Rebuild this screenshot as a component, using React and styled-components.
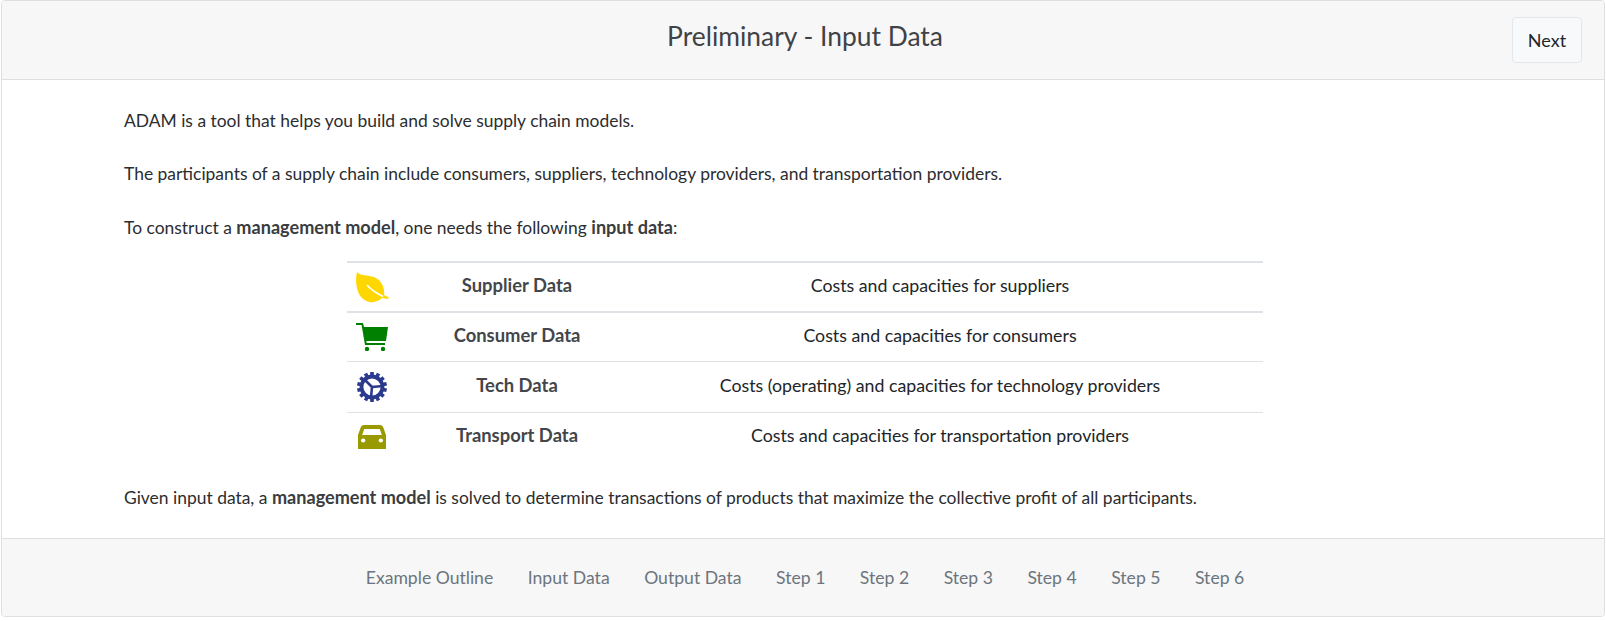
import React from 'react'
import styled, { createGlobalStyle } from 'styled-components'

const GlobalStyle = createGlobalStyle`
  html, body {
    margin: 0;
    padding: 0;
    background: #fff;
    font-family: Lato, "Open Sans", sans-serif;
    color: #212529;
  }
`

const Card = styled.div`
  margin: 0 1px;
  width: 1604px;
  height: 617px;
  box-sizing: border-box;
  border: 1px solid #dfdfdf;
  border-radius: 4px;
  display: flex;
  flex-direction: column;
  overflow: hidden;
`

const Header = styled.header`
  height: 79px;
  flex: none;
  box-sizing: border-box;
  padding-left: 4px;
  background: #f7f7f7;
  border-bottom: 1px solid #dfdfdf;
  position: relative;
  display: flex;
  align-items: center;
  justify-content: center;
`

const Title = styled.h1`
  margin: 0 0 9px;
  font-size: 26.4px;
  font-weight: 400;
  color: #3f4246;
`

const NextButton = styled.button`
  position: absolute;
  right: 22px;
  top: 16px;
  width: 70px;
  height: 46px;
  background: #f8f9fa;
  border: 1px solid #e4e7ea;
  border-radius: 4px;
  font: 400 18px Lato, sans-serif;
  color: #212529;
`

const Body = styled.main`
  flex: 1;
  min-height: 0;
  padding: 30px 118px 0 122px;
`

const Para = styled.p`
  margin: 0 0 ${p => p.$gap}px;
  font-size: 17.45px;
  line-height: 22px;
  color: #2b2d30;
`

const Strong = styled.b`
  font-size: 18.1px;
  font-weight: 700;
  color: #3a3c40;
`

const DataTable = styled.div`
  width: 916px;
  margin: 0 auto 24px;
`

const Row = styled.div`
  display: grid;
  grid-template-columns: 70px 200px 646px;
  align-items: center;
  height: 50.2px;
  box-sizing: border-box;
  border-top: ${p => (p.$heavy ? 2 : 1)}px solid #dee2e6;
`

const IconCell = styled.div`
  width: 50px;
  display: flex;
  align-items: center;
  justify-content: center;
`

const Name = styled.div`
  margin-bottom: 4px;
  text-align: center;
  font-size: 18.4px;
  font-weight: 700;
  color: #43464a;
`

const Desc = styled.div`
  margin-bottom: 4px;
  text-align: center;
  font-size: 17.75px;
  color: #212529;
`

const Footer = styled.footer`
  height: 78px;
  flex: none;
  box-sizing: border-box;
  padding-left: 4px;
  background: #f7f7f7;
  border-top: 1px solid #dfdfdf;
  display: flex;
  align-items: center;
  justify-content: center;
  gap: 34.5px;
`

const NavLink = styled.a`
  font-size: 17.6px;
  color: #6c757d;
`

const LeafIcon = () => (
  <svg width="33" height="31" viewBox="0 0 33 31">
    <path
      fill="#ffd700"
      d="M1 0 C4 4 12 3 18 5 C25 8 29 15 28 23 L33 25.5 L32 27 L26 26 C21 31 12 32 6 26 C0 20 -1 8 1 0 Z"
    />
    <path d="M11 13 C15 18 20 21 27 24.5" fill="none" stroke="#fff" strokeWidth="1.6" />
  </svg>
)

const CartIcon = () => (
  <svg width="32" height="28" viewBox="0 0 32 28">
    <g fill="#008000">
      <path d="M0 0 H7 L8 4 H32 L30 18 H10.3 L10.7 20 H29 V22 H9 L5.6 2 H0 Z" />
      <circle cx="11" cy="26" r="2.2" />
      <circle cx="27" cy="26" r="2.2" />
    </g>
  </svg>
)

const GearIcon = () => (
  <svg width="30" height="30" viewBox="0 0 30 30">
    <g fill="#2b3a8c">
      {Array.from({ length: 14 }).map((_, i) => (
        <rect key={i} x="13.2" y="0" width="3.6" height="5" transform={`rotate(${(i * 360) / 14} 15 15)`} />
      ))}
    </g>
    <circle cx="15" cy="15" r="10.5" fill="none" stroke="#2b3a8c" strokeWidth="3.8" />
    <path d="M15 15 L7 7 M15 15 L26 14 M15 15 L14 26" fill="none" stroke="#2b3a8c" strokeWidth="2.6" />
  </svg>
)

const CarIcon = () => (
  <svg width="28" height="24" viewBox="0 0 27 24" preserveAspectRatio="none">
    <path
      fill="#999900"
      d="M6 0 H21 C23 0 24 1 24.6 3 L27 10 V24 H0 V10 L2.4 3 C3 1 4 0 6 0 Z"
    />
    <path fill="#fff" d="M6 4 H21 L23 10 H4 Z" />
    <circle cx="5" cy="15.5" r="2.1" fill="#fff" />
    <circle cx="22" cy="15.5" r="2.1" fill="#fff" />
  </svg>
)

const rows = [
  { name: 'Supplier Data', desc: 'Costs and capacities for suppliers', icon: <LeafIcon />, heavy: true },
  { name: 'Consumer Data', desc: 'Costs and capacities for consumers', icon: <CartIcon />, heavy: true },
  { name: 'Tech Data', desc: 'Costs (operating) and capacities for technology providers', icon: <GearIcon /> },
  { name: 'Transport Data', desc: 'Costs and capacities for transportation providers', icon: <CarIcon /> },
]

const navItems = ['Example Outline', 'Input Data', 'Output Data', 'Step 1', 'Step 2', 'Step 3', 'Step 4', 'Step 5', 'Step 6']

export default function App() {
  return (
    <>
      <GlobalStyle />
      <Card>
        <Header>
          <Title>Preliminary - Input Data</Title>
          <NextButton>Next</NextButton>
        </Header>
        <Body>
          <Para $gap={31}>ADAM is a tool that helps you build and solve supply chain models.</Para>
          <Para $gap={31}>The participants of a supply chain include consumers, suppliers, technology providers, and transportation providers.</Para>
          <Para $gap={22}>To construct a <Strong>management model</Strong>, one needs the following <Strong>input data</Strong>:</Para>
          <DataTable>
            {rows.map(r => (
              <Row key={r.name} $heavy={r.heavy}>
                <IconCell>{r.icon}</IconCell>
                <Name>{r.name}</Name>
                <Desc>{r.desc}</Desc>
              </Row>
            ))}
          </DataTable>
          <Para $gap={0}>Given input data, a <Strong>management model</Strong> is solved to determine transactions of products that maximize the collective profit of all participants.</Para>
        </Body>
        <Footer>
          {navItems.map(item => <NavLink key={item}>{item}</NavLink>)}
        </Footer>
      </Card>
    </>
  )
}
